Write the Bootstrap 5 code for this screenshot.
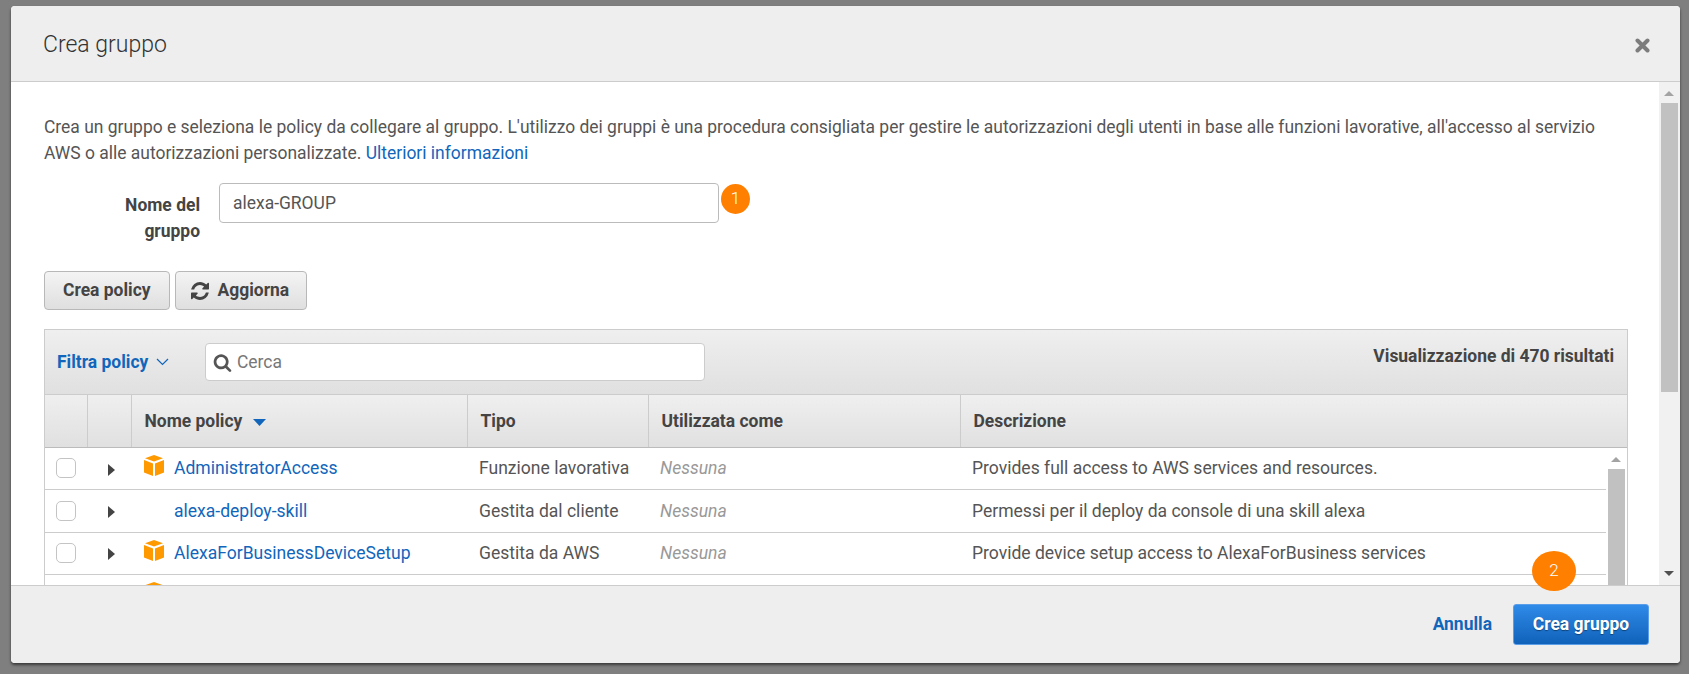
<!DOCTYPE html>
<html lang="it">
<head>
<meta charset="utf-8">
<title>Crea gruppo</title>
<link href="https://cdn.jsdelivr.net/npm/bootstrap@5.3.0/dist/css/bootstrap.min.css" rel="stylesheet">
<style>
html,body{height:100%;overflow:hidden}
body{background:#7f7f7f;font-family:Roboto,"Liberation Sans",sans-serif;font-size:17.47px;color:#555;padding:6px 9px 11px 11px}
a{color:#1166bb;text-decoration:none}
.dlg{height:657px;background:#fff;border:0;border-radius:4px;box-shadow:0 2px 3px rgba(0,0,0,.55);overflow:hidden;position:relative}
.dlg-head{height:76px;background:#eee;border-bottom:1px solid #ccc;padding:0 30px 0 32px;flex:none}
.dlg-title{font-size:23px;font-weight:300;color:#333;line-height:1;margin-top:2px!important}
.dlg-close{margin-top:4px}
.dlg-main{height:503px;flex:none;overflow:hidden}
.dlg-scroll{padding:32px 0 0 33px;min-width:0}
.intro{line-height:26px;margin:0;width:1585px}
.name-row{margin-top:17px;height:88px}
.name-lbl{width:130px;margin-left:26px;text-align:right;font-weight:700;line-height:26px;padding-top:9px;margin-right:19px;color:#444}
.name-inp{width:500px;height:40px;border:1px solid #bbb;border-radius:4px;padding:0 13px;font-size:17.47px;color:#555;box-shadow:none;flex:none}
.num{background:#ff8000;color:#fff;border-radius:50%;display:flex;align-items:center;justify-content:center;font-weight:300}
.num-one{width:29px;height:30px;margin:1px 0 0 2px;font-size:17px}
.num-two{position:absolute;left:1521px;top:545px;width:44px;height:40px;font-size:17px;z-index:5}
.gbtn{height:39px;background:linear-gradient(#f4f4f4,#dfdfdf);border:1px solid #b8b8b8;border-radius:4px;font-weight:700;font-size:17.47px;color:#444;padding:0 18px;box-shadow:none}
.gbtn:hover{color:#444;background:linear-gradient(#f4f4f4,#dfdfdf);border-color:#b8b8b8}
.gbtn-ico{padding-left:15px;padding-right:17px;gap:9px}
.btn-row{gap:5px}
.bar-wrap{margin-top:19px;width:1584px;border:1px solid #ccc;border-bottom:0}
.tool{height:65px;background:linear-gradient(#efefef,#e0e0e0);border-bottom:1px solid #ccc;padding:0 13px 0 12px}
.flt{font-weight:700;width:148px}
.srch{width:500px;height:38px;background:#fff;border:1px solid #ccc;border-radius:4px;padding-left:7px;gap:5px;color:#777}
.count{font-weight:700;margin-left:auto;position:relative;top:-6px;color:#444}
.pt{table-layout:fixed;width:100%;margin:0;border-collapse:collapse}
.pt-head th{height:52px;background:linear-gradient(#efefef,#e0e0e0);border-left:1px solid #ccc;border-bottom:1px solid #bbb;padding:0 12px 0 13px;font-weight:700;color:#444;vertical-align:middle}
.pt-head th:first-child{border-left:0}
.sort-ico{margin-left:6px}
.pt-body td{height:42.3px;border-bottom:1px solid #ccc;padding:0 12px;vertical-align:middle;background:#fff;color:#555;white-space:nowrap;font-size:17.55px}
.pt-body td.nil{color:#999;font-style:italic}
.pt-body td.td-check{padding-left:11px}
.pt-body td.td-name{padding-left:14px}
.fake-check{display:block;width:20px;height:20px;border:1px solid #c4c4c4;border-radius:5px;background:#fff}
.caret-ico{margin-left:9px}
.bars-in{width:21px;flex:none;background:#f1f1f1;position:relative}
.bars-plain{height:300px;background:#fff}
.thumb{background:#c1c1c1;position:absolute;left:2px;right:2px}
.thumb-in{top:21px;bottom:0}
.thumb-out{top:21px;height:289px}
.arr-up,.arr-dn{position:absolute;left:5px;width:0;height:0;border-left:5px solid transparent;border-right:5px solid transparent}
.arr-up{border-bottom:5px solid #a3a3a3;top:9px}
.arr-dn{border-top:5px solid #505050;bottom:9px}
.cube-cell{display:flex;align-items:center;gap:10px}
.cube-slot{width:20px;height:21px;flex:none;margin-left:-1px;margin-top:-6px}
.rows-box{min-width:0}
.dlg-foot{background:#eee;border-top:1px solid #ccc;flex:1 1 auto;padding:0 31px 0 0;gap:21px}
.go{height:41px;width:136px;background:linear-gradient(#2f8ae8,#1062b9);border:1px solid #5a9de8;border-radius:3px;color:#fff;font-weight:700;font-size:17.47px;padding:0;text-shadow:0 1px 1px rgba(0,0,0,.4);box-shadow:none}
.go:hover{color:#fff;background:linear-gradient(#2f8ae8,#1062b9);border-color:#5a9de8}
.c1{width:42px}.c2{width:44px}.c3{width:336px}.c4{width:181px}.c5{width:312px}
</style>
</head>
<body>
<div class="dlg d-flex flex-column" role="dialog">
  <div class="dlg-head d-flex align-items-center justify-content-between">
    <h4 class="dlg-title m-0">Crea gruppo</h4>
    <svg class="dlg-close" width="15" height="15" viewBox="0 0 15 15" aria-label="Chiudi"><path d="M2.500 2.500 12.500 12.500M12.500 2.500 2.500 12.500" stroke="#7d7d7d" stroke-width="4" stroke-linecap="round"/></svg>
  </div>
  <div class="dlg-main d-flex">
    <div class="dlg-scroll flex-grow-1">
      <p class="intro">Crea un gruppo e seleziona le policy da collegare al gruppo. L'utilizzo dei gruppi è una procedura consigliata per gestire le autorizzazioni degli utenti in base alle funzioni lavorative, all'accesso al servizio AWS o alle autorizzazioni personalizzate. <a href="#">Ulteriori informazioni</a></p>
      <div class="name-row d-flex align-items-start">
        <label class="name-lbl">Nome del gruppo</label>
        <input class="form-control name-inp" value="alexa-GROUP">
        <span class="num num-one">1</span>
      </div>
      <div class="btn-row d-flex">
        <button class="btn gbtn" type="button">Crea policy</button>
        <button class="btn gbtn gbtn-ico d-flex align-items-center" type="button">
          <svg width="18" height="18" viewBox="0 0 1536 1536"><path fill="#444" d="M1511 928q0 5-1 7-64 268-268 434.500t-478 166.500q-146 0-282.500-55t-243.500-157l-129 129q-19 19-45 19t-45-19-19-45v-448q0-26 19-45t45-19h448q26 0 45 19t19 45-19 45l-137 137q71 66 161 102t187 36q134 0 250-65t186-179q11-17 53-117 8-23 30-23h192q13 0 22.500 9.500t9.500 22.500zm25-800v448q0 26-19 45t-45 19h-448q-26 0-45-19t-19-45 19-45l138-138q-148-137-349-137-134 0-250 65t-186 179q-11 17-53 117-8 23-30 23h-199q-13 0-22.500-9.500t-9.500-22.500v-7q65-268 270-434.500t480-166.500q146 0 284 55.500t245 156.500l130-129q19-19 45-19t45 19 19 45z"/></svg>
          Aggiorna
        </button>
      </div>
      <div class="bar-wrap">
        <div class="tool d-flex align-items-center">
          <a href="#" class="flt d-flex align-items-center gap-2">Filtra policy
            <svg width="13" height="8" viewBox="0 0 13 8"><path d="M1 1l5.500 5.500L12 1" fill="none" stroke="#1166bb" stroke-width="1.200"/></svg>
          </a>
          <div class="srch d-flex align-items-center">
            <svg width="19" height="19" viewBox="0 0 1792 1792"><path fill="#555" d="M1216 832q0-185-131.500-316.500t-316.500-131.500-316.500 131.500-131.500 316.500 131.500 316.500 316.500 131.500 316.500-131.500 131.500-316.500zm512 832q0 52-38 90t-90 38q-54 0-90-38l-343-342q-179 124-399 124-143 0-273.500-55.500t-225-150-150-225-55.500-273.500 55.500-273.500 150-225 225-150 273.500-55.500 273.500 55.500 225 150 150 225 55.500 273.500q0 220-124 399l343 343q37 37 37 90z"/></svg>
            <span>Cerca</span>
          </div>
          <span class="count">Visualizzazione di 470 risultati</span>
        </div>
        <table class="pt pt-head">
          <colgroup><col class="c1"><col class="c2"><col class="c3"><col class="c4"><col class="c5"><col></colgroup>
          <thead><tr>
            <th></th><th></th>
            <th>Nome policy <svg class="sort-ico" width="13" height="7" viewBox="0 0 13 7"><path d="M0 0h13L6.500 7z" fill="#1166bb"/></svg></th>
            <th>Tipo</th><th>Utilizzata come</th><th>Descrizione</th>
          </tr></thead>
        </table>
        <div class="d-flex">
          <div class="rows-box flex-grow-1">
            <table class="pt pt-body">
              <colgroup><col class="c1"><col class="c2"><col class="c3"><col class="c4"><col class="c5"><col></colgroup>
              <tbody>
                <tr><td class="td-check"><span class="fake-check"></span></td><td><svg width="7" height="12" viewBox="0 0 7 12" class="caret-ico"><path d="M0 0l7 6-7 6z" fill="#444"/></svg></td><td class="td-name"><div class="cube-cell"><svg class="cube-slot" viewBox="0 0 20 21"><path fill="#f90" d="M10 0l9 3.200-9 3.200-9-3.200zM0 5l9 3.400V21l-9-3.400zM20 5l-9 3.400V21l9-3.400z"/></svg><a href="#">AdministratorAccess</a></div></td><td>Funzione lavorativa</td><td class="nil">Nessuna</td><td>Provides full access to AWS services and resources.</td></tr>
                <tr><td class="td-check"><span class="fake-check"></span></td><td><svg width="7" height="12" viewBox="0 0 7 12" class="caret-ico"><path d="M0 0l7 6-7 6z" fill="#444"/></svg></td><td class="td-name"><div class="cube-cell"><span class="cube-slot"></span><a href="#">alexa-deploy-skill</a></div></td><td>Gestita dal cliente</td><td class="nil">Nessuna</td><td>Permessi per il deploy da console di una skill alexa</td></tr>
                <tr><td class="td-check"><span class="fake-check"></span></td><td><svg width="7" height="12" viewBox="0 0 7 12" class="caret-ico"><path d="M0 0l7 6-7 6z" fill="#444"/></svg></td><td class="td-name"><div class="cube-cell"><svg class="cube-slot" viewBox="0 0 20 21"><path fill="#f90" d="M10 0l9 3.200-9 3.200-9-3.200zM0 5l9 3.400V21l-9-3.400zM20 5l-9 3.400V21l9-3.400z"/></svg><a href="#">AlexaForBusinessDeviceSetup</a></div></td><td>Gestita da AWS</td><td class="nil">Nessuna</td><td>Provide device setup access to AlexaForBusiness services</td></tr>
                <tr><td class="td-check"><span class="fake-check"></span></td><td><svg width="7" height="12" viewBox="0 0 7 12" class="caret-ico"><path d="M0 0l7 6-7 6z" fill="#444"/></svg></td><td class="td-name"><div class="cube-cell"><svg class="cube-slot" viewBox="0 0 20 21"><path fill="#f90" d="M10 0l9 3.200-9 3.200-9-3.200zM0 5l9 3.400V21l-9-3.400zM20 5l-9 3.400V21l9-3.400z"/></svg></div></td><td></td><td></td><td></td></tr>
              </tbody>
            </table>
          </div>
          <div class="bars-in bars-plain"><i class="arr-up"></i><div class="thumb thumb-in"></div></div>
        </div>
      </div>
    </div>
    <div class="bars-in"><i class="arr-up"></i><div class="thumb thumb-out"></div><i class="arr-dn"></i></div>
  </div>
  <div class="dlg-foot d-flex align-items-center justify-content-end">
    <a href="#" class="fw-bold">Annulla</a>
    <button class="btn go" type="button">Crea gruppo</button>
  </div>
  <span class="num num-two">2</span>
</div>
</body>
</html>
